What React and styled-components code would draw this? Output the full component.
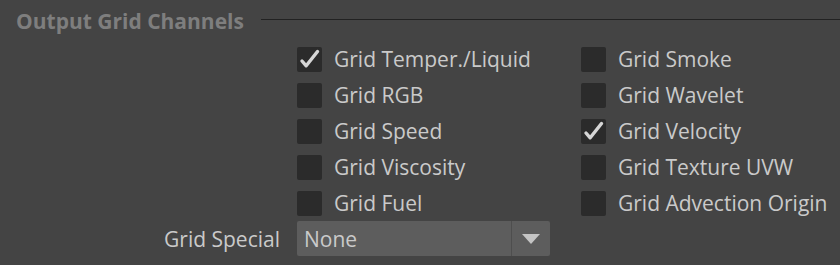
import React from 'react'
import styled, { createGlobalStyle } from 'styled-components'

const GlobalStyle = createGlobalStyle`
  html, body {
    margin: 0;
    padding: 0;
    background: #444444;
  }
  body {
    font-family: "Open Sans", "Noto Sans", sans-serif;
    width: 840px;
    height: 265px;
    overflow: hidden;
  }
`

const leftChannels = [
  { label: 'Grid Temper./Liquid', checked: true },
  { label: 'Grid RGB' },
  { label: 'Grid Speed' },
  { label: 'Grid Viscosity' },
  { label: 'Grid Fuel' }
]

const rightChannels = [
  { label: 'Grid Smoke' },
  { label: 'Grid Wavelet' },
  { label: 'Grid Velocity', checked: true },
  { label: 'Grid Texture UVW' },
  { label: 'Grid Advection Origin' }
]

function Check({ label, checked }) {
  return (
    <Row>
      <Box>
        {checked && (
          <svg width="25" height="25" viewBox="0 0 25 25">
            <path d="M5 14 L9.2 18.8 L20.5 4.5" fill="none" stroke="#d6d6d6" strokeWidth="3.4" strokeLinecap="round" strokeLinejoin="round" />
          </svg>
        )}
      </Box>
      <Label>{label}</Label>
    </Row>
  )
}

export default function App() {
  return (
    <Panel>
      <GlobalStyle />
      <Header>
        <Title>Output Grid Channels</Title>
        <Rule />
      </Header>
      <Columns>
        <Column>
          {leftChannels.map((c) => <Check key={c.label} {...c} />)}
        </Column>
        <Column>
          {rightChannels.map((c) => <Check key={c.label} {...c} />)}
        </Column>
      </Columns>
      <SpecialRow>
        <FieldLabel>Grid Special</FieldLabel>
        <Select>
          <SelectValue>None</SelectValue>
          <SelectButton>
            <svg width="18" height="10" viewBox="0 0 18 10">
              <path d="M0 0 L18 0 L9 10 Z" fill="#c4c4c4" />
            </svg>
          </SelectButton>
        </Select>
      </SpecialRow>
    </Panel>
  )
}

const Panel = styled.div`
  width: 840px;
  height: 265px;
  background: #444444;
  color: #cacaca;
  font-size: 21px;
`

const Header = styled.div`
  display: flex;
  align-items: center;
  height: 40px;
  padding-left: 16px;
`

const Title = styled.div`
  font-weight: 700;
  color: #7e7e7e;
  font-size: 21px;
  margin-top: 2px;
  white-space: nowrap;
`

const Rule = styled.div`
  flex: 1;
  height: 1px;
  background: #222222;
  margin-left: 17px;
  margin-top: -2px;
`

const Columns = styled.div`
  display: flex;
  padding-left: 297px;
  margin-top: 1px;
`

const Column = styled.div`
  display: flex;
  flex-direction: column;
  width: 284px;
  flex: none;
`

const Row = styled.div`
  display: flex;
  align-items: center;
  height: 36px;
`

const Box = styled.div`
  width: 25px;
  height: 25px;
  background: #2b2b2b;
  border-radius: 2px;
  flex: none;
  display: flex;
`

const Label = styled.div`
  margin-left: 12px;
  white-space: nowrap;
`

const SpecialRow = styled.div`
  display: flex;
  align-items: center;
  margin-top: 0px;
`

const FieldLabel = styled.div`
  width: 297px;
  flex: none;
  text-align: right;
  padding-right: 17px;
  box-sizing: border-box;
`

const Select = styled.div`
  display: flex;
  width: 253px;
  height: 35px;
  background: #5d5d5d;
  border-radius: 2px;
  overflow: hidden;
`

const SelectValue = styled.div`
  flex: 1;
  display: flex;
  align-items: center;
  padding-left: 7px;
  border-right: 1px solid #4e4e4e;
`

const SelectButton = styled.div`
  width: 38px;
  display: flex;
  align-items: center;
  justify-content: center;
`
